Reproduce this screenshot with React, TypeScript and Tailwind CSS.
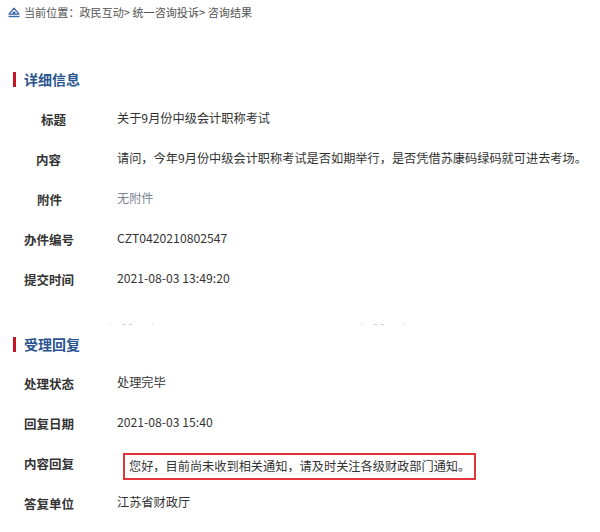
import React from "react"

const font = { fontFamily: '"Noto Sans CJK SC", "Noto Sans", sans-serif' }

const HomeIcon = () => (
  <svg width="12" height="11" viewBox="0 0 12 11" className="shrink-0">
    <path d="M6 1.2 L11 7.2 H1 Z" fill="none" stroke="#3b6aa8" strokeWidth="1.3" strokeLinejoin="round" />
    <rect x="4.6" y="4.6" width="2.8" height="2.6" fill="#3b6aa8" />
    <rect x="0.5" y="8.8" width="11" height="1.4" fill="#3b6aa8" />
  </svg>
)

const SectionTitle = ({ children }: { children: React.ReactNode }) => (
  <div className="flex items-center h-[20px]">
    <span className="w-[3px] h-[15px] bg-[#c4162a]" />
    <span className="ml-[8px] text-[14px] font-bold text-[#2a5590] leading-none">{children}</span>
  </div>
)

interface Row {
  label: string
  indent: string
  value: React.ReactNode
}

const InfoRow = ({ label, indent, value }: Row) => (
  <div className="flex items-center h-[40px]">
    <div className="w-[104px] shrink-0">
      <span className={`${indent} text-[12.5px] font-bold text-[#333]`}>{label}</span>
    </div>
    <div className="text-[12.2px] text-[#333] whitespace-nowrap">{value}</div>
  </div>
)

export default function App() {
  const detail: Row[] = [
    { label: "标题", indent: "ml-[28px]", value: "关于9月份中级会计职称考试" },
    {
      label: "内容",
      indent: "ml-[23px]",
      value: "请问，今年9月份中级会计职称考试是否如期举行，是否凭借苏康码绿码就可进去考场。",
    },
    { label: "附件", indent: "ml-[24px]", value: <span className="text-[#7b8494]">无附件</span> },
    { label: "办件编号", indent: "ml-[11px]", value: "CZT0420210802547" },
    { label: "提交时间", indent: "ml-[11px]", value: "2021-08-03 13:49:20" },
  ]

  const reply: Row[] = [
    { label: "处理状态", indent: "ml-[11px]", value: "处理完毕" },
    { label: "回复日期", indent: "ml-[11px]", value: "2021-08-03 15:40" },
    {
      label: "内容回复",
      indent: "ml-[11px]",
      value: (
        <div className="ml-[6px] mt-[8px] border-2 border-[#e2353b] px-[4px] h-[27px] flex items-center">
          您好，目前尚未收到相关通知，请及时关注各级财政部门通知。
        </div>
      ),
    },
    { label: "答复单位", indent: "ml-[11px]", value: "江苏省财政厅" },
  ]

  return (
    <div className="w-[600px] h-[532px] bg-white overflow-hidden pl-[13px]" style={font}>
      <div className="flex items-center h-[24px] -ml-[5px] gap-[4px] text-[11.1px] text-[#555]">
        <HomeIcon />
        <span>当前位置：政民互动&gt; 统一咨询投诉&gt; 咨询结果</span>
      </div>

      <div className="mt-[45px]">
        <SectionTitle>详细信息</SectionTitle>
      </div>
      <div className="mt-[9px]">
        {detail.map((r) => (
          <InfoRow key={r.label} {...r} />
        ))}
      </div>

      <div className="flex items-center h-[10px] mt-[21px]">
        <span className="ml-[96px] flex gap-[4px] items-center">
          <span className="w-[1px] h-[1px] bg-[#ccc]" />
          <span className="w-[3px] h-[1px] bg-[#ccc] ml-[8px]" />
          <span className="w-[3px] h-[1px] bg-[#ccc]" />
          <span className="w-[1px] h-[1px] bg-[#ccc] ml-[16px]" />
        </span>
        <span className="ml-[208px] flex gap-[4px] items-center">
          <span className="w-[1px] h-[1px] bg-[#ccc]" />
          <span className="w-[3px] h-[1px] bg-[#ccc] ml-[8px]" />
          <span className="w-[3px] h-[1px] bg-[#ccc]" />
          <span className="w-[1px] h-[1px] bg-[#ccc] ml-[16px]" />
        </span>
      </div>

      <div className="mt-[5px]">
        <SectionTitle>受理回复</SectionTitle>
      </div>
      <div className="mt-[8px]">
        {reply.map((r) => (
          <InfoRow key={r.label} {...r} />
        ))}
      </div>
    </div>
  )
}
